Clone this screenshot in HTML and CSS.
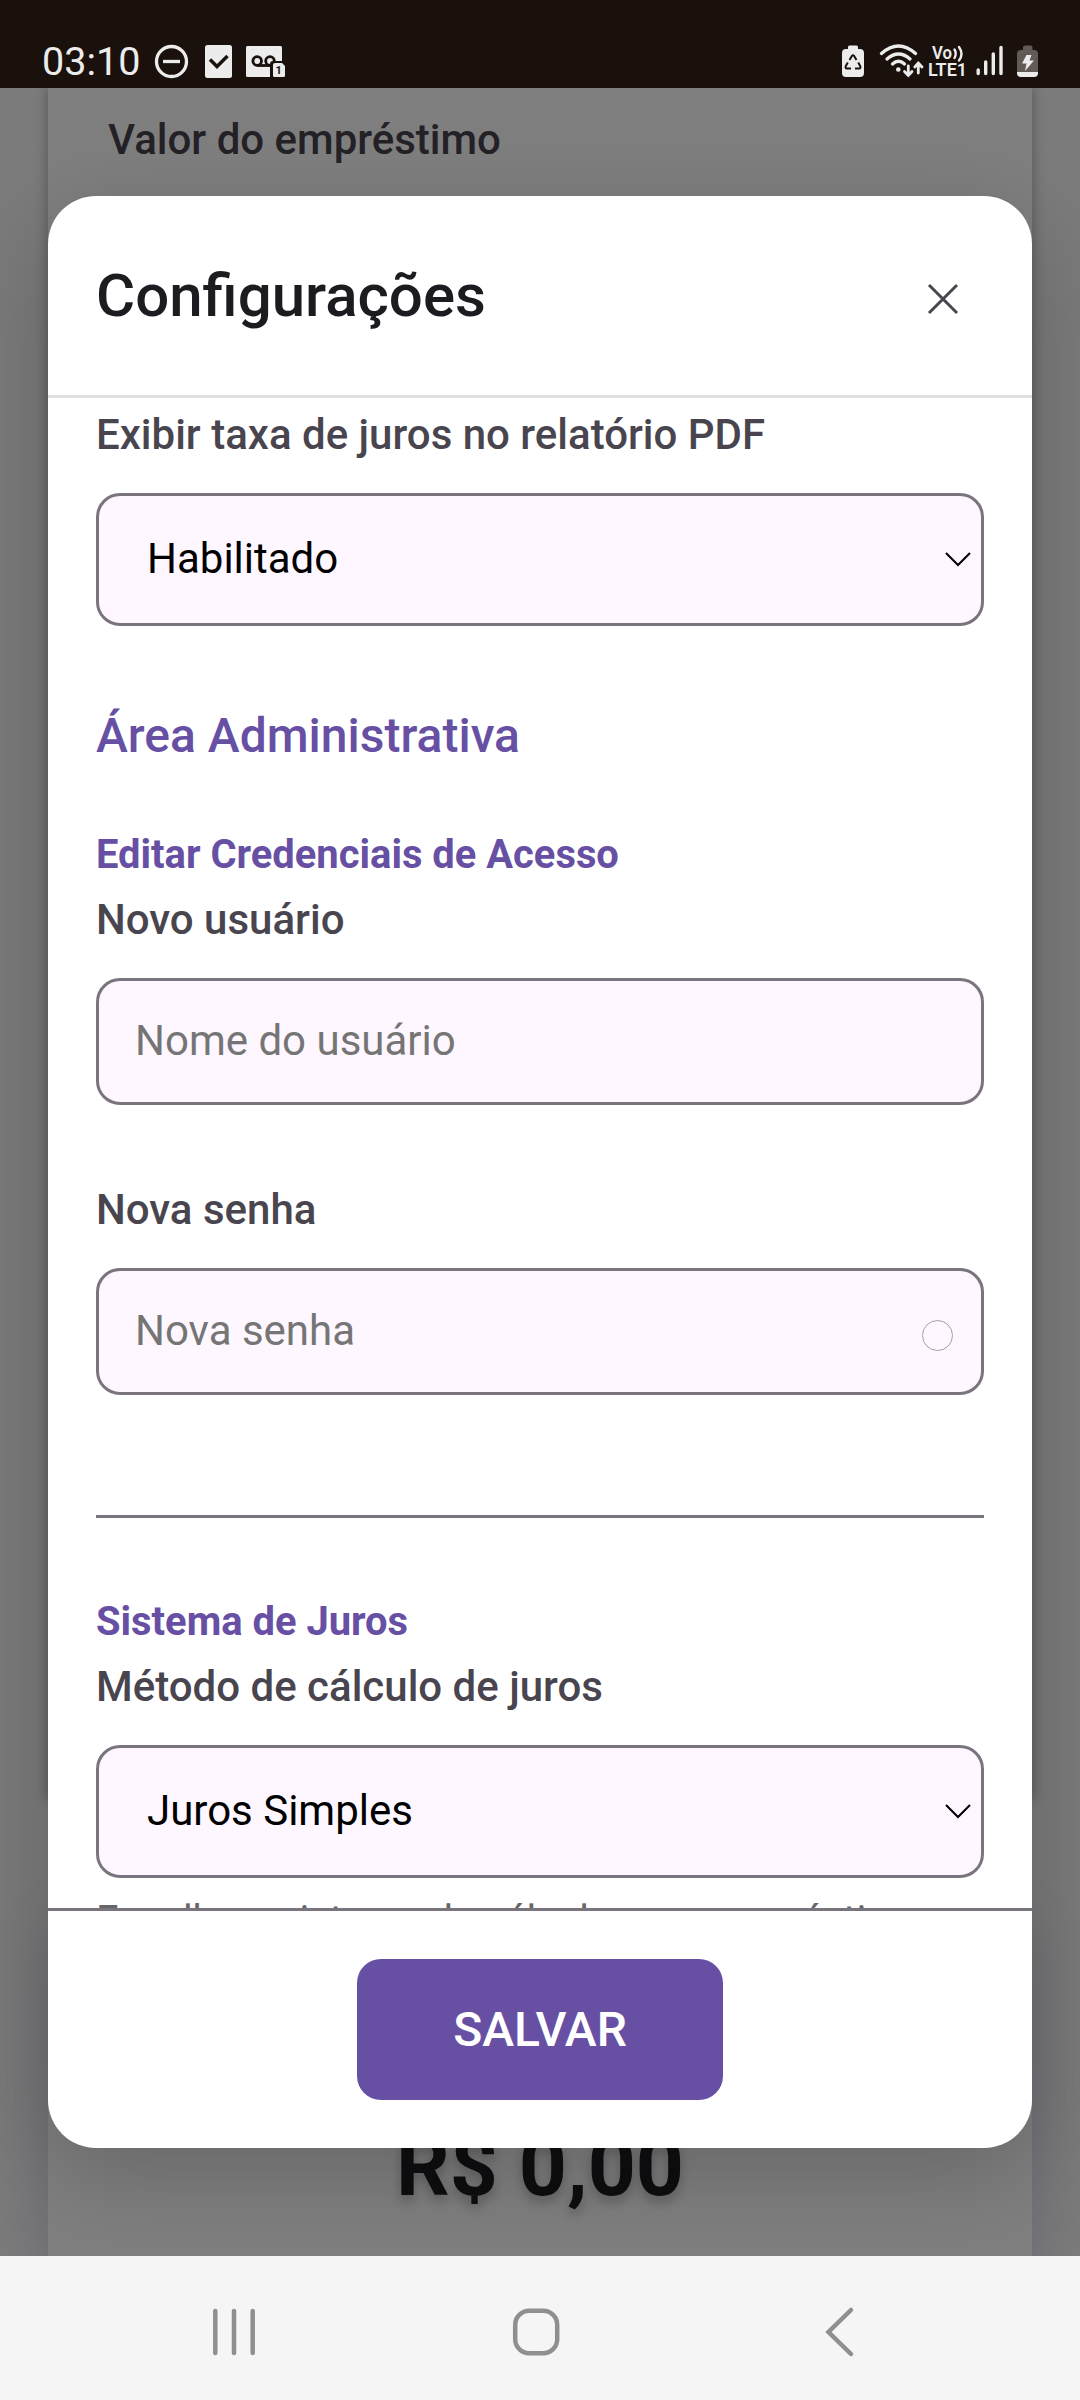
FILE: index.html
```html
<!DOCTYPE html>
<html lang="pt-BR">
<head>
<meta charset="utf-8">
<title>Configurações</title>
<link rel="stylesheet" href="styles.css">
</head>
<body>
<div class="screen">
  <header class="status-bar">
    <span class="clock">03:10</span>
    <svg class="alerts" width="80" height="35" viewBox="-1 -1 80 35" fill="none" stroke="#ececec" stroke-width="3.3">
      <circle cx="16.5" cy="16.5" r="15"/>
      <path d="M8 16.5H25"/>
      <rect x="50" y="0" width="27" height="33" rx="2.5" fill="#ececec" stroke="none"/>
      <path d="M55 14.5L62 21.5L72.5 11" stroke="#1a110c" stroke-width="3.5"/>
    </svg>
    <svg class="voicemail" width="42" height="34" viewBox="245 45 42 34">
      <rect x="246" y="46" width="36" height="31" rx="1.5" fill="#ececec"/>
      <g fill="none" stroke="#1a110c" stroke-width="2.8">
        <circle cx="257.2" cy="61" r="4.3"/>
        <circle cx="270" cy="61" r="4.3"/>
        <path d="M257 65.500h15"/>
      </g>
      <path d="M270 78V64q0-3 3-3h13v17z" fill="#1a110c"/>
      <path d="M273 65q0-2 2-2h7l3 3v9.500q0 1.500-1.500 1.500h-9q-1.500 0-1.500-1.500z" fill="#ececec"/>
      <text x="278.700" y="74" text-anchor="middle" font-family="Roboto, sans-serif" font-size="11" font-weight="700" fill="#1a110c">1</text>
    </svg>
    <svg class="status-right" width="200" height="36" viewBox="840 43 200 36" fill="none" stroke="#ececec" stroke-linecap="round">
      <path d="M848 49v-2q0-1.500 1.500-1.500h7q1.500 0 1.500 1.500v2h2q4 0 4 4v20q0 4-4 4h-14q-4 0-4-4v-20q0-4 4-4z" fill="#ececec" stroke="none"/>
      <g stroke="#1a110c" stroke-width="2" stroke-linejoin="round" stroke-linecap="butt">
        <path d="M849.500 60l2.500-4.200q1-1.300 2 0l2.500 4.200M847.800 62.500l-2 3.500q-.8 2.300 1.200 2.600h4M858.200 62.500l2 3.500q.8 2.300-1.200 2.600h-4"/>
      </g>
      <g stroke-width="3.300">
        <path d="M881.500 53.500Q898.500 38.500 915.500 53.500"/>
        <path d="M887 59Q898.500 49 910 59"/>
        <path d="M892.500 64Q898.500 58.500 904.500 64"/>
      </g>
      <circle cx="898.300" cy="69.500" r="2.300" fill="#ececec" stroke="none"/>
      <path d="M908.300 66V75.500M904.500 71.500L908.300 75.500L912 71.500M918.300 73V63.500M914.800 67L918.300 63L922 67" stroke-width="2.800"/>
      <g fill="#ececec" stroke="none" font-family="Roboto, sans-serif" font-weight="600">
        <text x="932" y="59.300" font-size="18" textLength="20" lengthAdjust="spacingAndGlyphs">Vo</text>
        <text x="928" y="76" font-size="17.500" textLength="39" lengthAdjust="spacingAndGlyphs">LTE1</text>
      </g>
      <path d="M954.500 49.500q2.500 4 0 8.500M959 47q5 7 0 13.500" stroke-width="2.400"/>
      <path d="M978.200 70v3.500M985.700 62v11.500M993.300 54v19.500M1001 47.500v26" stroke-width="3.400"/>
      <path d="M1023 50v-2.500q0-2 2-2h5.500q2 0 2 2v2.500h1.500q4 0 4 4v18h-21v-18q0-4 4-4z" fill="#625a57" stroke="none"/>
      <path d="M1017 72h21v1q0 4-4 4h-13q-4 0-4-4z" fill="#ececec" stroke="none"/>
      <path d="M1026.500 55h5l-2 5.500h4.500l-9 10.500l1.500-7.500h-4.500z" fill="#ececec" stroke="none"/>
    </svg>
  </header>

  <main class="page">
    <section class="card loan-card">
      <span class="loan-label">Valor do empréstimo</span>
    </section>
    <section class="card total-card">
      <strong class="total">R$ 0,00</strong>
    </section>

    <div class="overlay">
      <div class="modal">
        <div class="modal-header">
          <h2>Configurações</h2>
          <svg class="close" width="32" height="32" viewBox="0 0 32 32"><path d="M2 2L30 30M30 2L2 30"/></svg>
        </div>
        <div class="modal-body">
          <label class="label">Exibir taxa de juros no relatório PDF</label>
          <div class="field select">
            <span>Habilitado</span>
            <svg class="chevron" width="26" height="15" viewBox="0 0 26 15"><path d="M1 1L13 13L25 1"/></svg>
          </div>
          <h3>Área Administrativa</h3>
          <h4>Editar Credenciais de Acesso</h4>
          <label class="label">Novo usuário</label>
          <div class="field input"><span>Nome do usuário</span></div>
          <label class="label spaced">Nova senha</label>
          <div class="field input"><span>Nova senha</span><i class="toggle"></i></div>
          <hr>
          <h4>Sistema de Juros</h4>
          <label class="label">Método de cálculo de juros</label>
          <div class="field select">
            <span>Juros Simples</span>
            <svg class="chevron" width="26" height="15" viewBox="0 0 26 15"><path d="M1 1L13 13L25 1"/></svg>
          </div>
          <p class="hint">Escolha o sistema de cálculo para empréstimos</p>
        </div>
        <div class="modal-footer">
          <button class="save">SALVAR</button>
        </div>
      </div>
    </div>
  </main>

  <nav class="nav-bar">
    <svg width="44" height="52" viewBox="212 2306 44 52"><path d="M215.300 2311V2353M234 2311V2353M252.700 2311V2353"/></svg>
    <svg class="home" width="52" height="52" viewBox="510 2306 52 52"><rect x="515.200" y="2310.800" width="42" height="42.500" rx="14"/></svg>
    <svg width="32" height="52" viewBox="824 2306 32 52"><path d="M851 2310L828.500 2332L851 2354"/></svg>
  </nav>
</div>
</body>
</html>
```
FILE: styles.css
```css
* { box-sizing: border-box; }

body {
  margin: 0;
  font-family: Roboto, "Liberation Sans", sans-serif;
}

svg { display: block; flex: none; }

h2, h3, h4, p { margin: 0; }

.screen {
  display: flex;
  flex-direction: column;
  width: 1080px;
  height: 2400px;
  overflow: hidden;
}

/* Status bar */
.status-bar {
  display: flex;
  align-items: flex-start;
  flex: none;
  height: 88px;
  padding: 39px 40px 0 42px;
  background: #1a110c;
}

.clock {
  flex: none;
  width: 112px;
  font-size: 39.5px;
  line-height: 46px;
  color: #ececec;
}

.alerts { margin-top: 5px; }
.voicemail { margin: 6px 0 0 11px; }
.status-right { margin: 4px 0 0 auto; }

/* Page behind the dialog */
.page {
  position: relative;
  display: flex;
  flex-direction: column;
  flex: none;
  gap: 108px;
  height: 2168px;
  padding: 0 48px;
  overflow: hidden;
  background: #f6f6f6;
}

.card { background: #fff; }

.loan-card {
  height: 1712px;
  padding: 27px 60px;
  box-shadow: 0 0 12px rgba(0, 0, 0, .32);
}

.loan-label {
  display: block;
  font-size: 42px;
  font-weight: 500;
  line-height: 49px;
  color: #49454f;
}

.total-card {
  flex: 1;
  padding-top: 209px;
  text-align: center;
  box-shadow: 0 24px 54px rgba(103, 80, 164, .24);
}

.total {
  display: block;
  font-size: 84px;
  font-weight: 700;
  line-height: 99px;
  color: #1c1b1f;
  text-shadow: 0 6px 12px rgba(0, 0, 0, .25);
}

/* Dialog */
.overlay {
  position: absolute;
  inset: 0;
  display: flex;
  align-items: center;
  justify-content: center;
  background: rgba(0, 0, 0, .5);
}

.modal {
  display: flex;
  flex-direction: column;
  width: 984px;
  height: 1952px;
  border-radius: 48px;
  overflow: hidden;
  background: #fff;
  box-shadow: 0 24px 96px rgba(0, 0, 0, .2);
}

.modal-header {
  display: flex;
  align-items: center;
  justify-content: space-between;
  flex: none;
  height: 202px;
  padding: 0 73px 0 48px;
  border-bottom: 3px solid #e0e0e0;
}

.modal-header h2 {
  font-size: 60px;
  font-weight: 500;
  line-height: 71px;
  color: #1c1b1f;
}

.close {
  margin-top: 6px;
  fill: none;
  stroke: #49454f;
  stroke-width: 3;
}

.modal-body {
  flex: 1;
  min-height: 0;
  padding: 12px 48px 0;
  overflow: hidden;
}

.label {
  display: block;
  font-size: 42px;
  font-weight: 500;
  line-height: 49px;
  color: #49454f;
}

.label.spaced { margin-top: 80px; }

.field {
  display: flex;
  align-items: center;
  justify-content: space-between;
  margin-top: 34px;
  border: 3px solid #79747e;
  border-radius: 24px;
  background: #fef7ff;
  font-size: 42px;
  line-height: 49px;
}

.field span { padding-bottom: 2px; }

.select {
  height: 133px;
  padding: 0 10px 0 48px;
  color: #000;
}

.chevron {
  fill: none;
  stroke: #000;
  stroke-width: 2;
}

.input {
  height: 127px;
  padding: 0 28px 0 36px;
  color: #757575;
}

.toggle {
  width: 31px;
  height: 31px;
  margin-top: 7px;
  border: 1.5px solid #a39fa5;
  border-radius: 50%;
}

h3 {
  margin-top: 81px;
  font-size: 48px;
  font-weight: 500;
  line-height: 57px;
  color: #6750a4;
}

h4 {
  margin-bottom: 17px;
  font-size: 39.9px;
  font-weight: 700;
  line-height: 47px;
  color: #6750a4;
}

h3 + h4 { margin-top: 67px; }

hr {
  height: 3px;
  margin: 120px 0 80px;
  border: 0;
  background: #79747e;
}

.hint {
  margin-top: 19px;
  font-size: 39.9px;
  line-height: 47px;
  white-space: nowrap;
  color: #666;
}

.modal-footer {
  display: flex;
  justify-content: center;
  flex: none;
  padding: 48px;
  border-top: 3px solid #79747e;
}

.save {
  height: 141px;
  padding: 0 96px;
  border: 0;
  border-radius: 24px;
  background: #6750a4;
  font-family: inherit;
  font-size: 48px;
  font-weight: 500;
  line-height: 57px;
  color: #fff;
}

/* System navigation */
.nav-bar {
  display: flex;
  align-items: center;
  flex: none;
  height: 144px;
  padding: 8px 224px 0 212px;
  background: #f5f5f5;
}

.nav-bar svg {
  fill: none;
  stroke: #8f8f8f;
  stroke-width: 4.5px;
  stroke-linecap: round;
}

.nav-bar .home { margin: 0 262px 0 254px; }
```
